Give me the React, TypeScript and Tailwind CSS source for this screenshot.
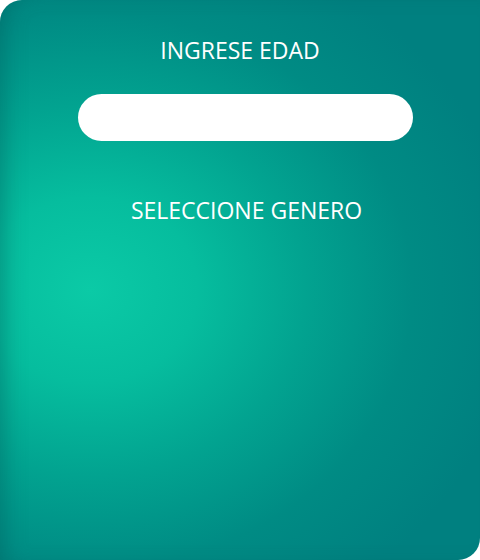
export default function App() {
  return (
    <div className="w-[480px] h-[560px] bg-white">
      <div className="w-full h-full rounded-tl-[22px] rounded-br-[22px] bg-[radial-gradient(ellipse_430px_370px_at_90px_290px,#0bcaa6_0%,#06bd9e_25%,#02a390_50%,#008b84_75%,#008080_100%)] shadow-[inset_14px_0_22px_-10px_rgba(0,90,90,0.45)] flex flex-col items-center font-['Open_Sans',sans-serif] text-white">
        <h2 className="mt-[35px] text-[23px] leading-[30px]">INGRESE EDAD</h2>
        <input
          type="text"
          className="mt-[29px] ml-[11px] w-[335px] h-[47px] rounded-full bg-white outline-none px-5 text-black"
        />
        <h2 className="mt-[54px] ml-[13px] text-[23px] leading-[30px]">SELECCIONE GENERO</h2>
      </div>
    </div>
  );
}
